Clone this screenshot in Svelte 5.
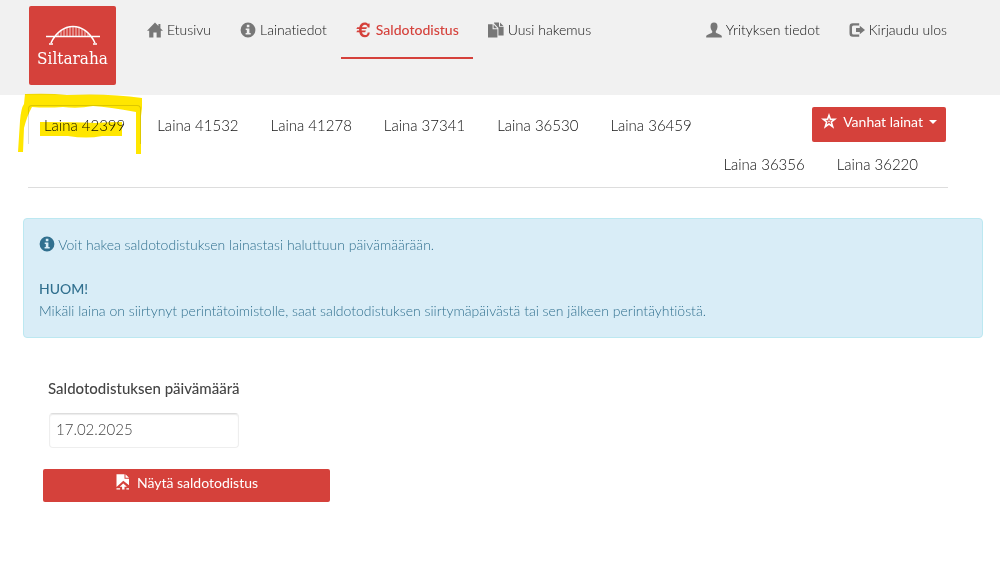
<script>
  let activeNav = $state('saldo');
  let activeLoan = $state('42399');
  let date = $state('17.02.2025');

  const mainNav = [
    { id: 'etusivu', icon: 'home', label: 'Etusivu' },
    { id: 'lainat', icon: 'info', label: 'Lainatiedot' },
    { id: 'saldo', icon: 'euro', label: 'Saldotodistus' },
    { id: 'hakemus', icon: 'copy', label: 'Uusi hakemus' }
  ];

  const userNav = [
    { id: 'yritys', icon: 'user', label: 'Yrityksen tiedot' },
    { id: 'ulos', icon: 'logout', label: 'Kirjaudu ulos' }
  ];

  const loans = ['42399', '41532', '41278', '37341', '36530', '36459'];
  const moreLoans = ['36356', '36220'];
</script>

{#snippet icon(name)}
  <svg class="icon" viewBox="0 0 16 16" aria-hidden="true">
    {#if name === 'home'}
      <path d="M8 0.4 0 8.8H2.2V15.4H6.4V10.4H9.6V15.4H13.8V8.8H16L13.4 6.2V2H11.4V4Z" />
    {:else if name === 'info'}
      <path fill-rule="evenodd" d="M8 0.6a7.4 7.4 0 1 0 0 14.8A7.4 7.4 0 0 0 8 0.6ZM6.8 2.8h2.6v2.4H6.8ZM5.7 6.4h3.7v4.6h1.3v1.6H5.6V11h1.2V8H5.7Z" />
    {:else if name === 'euro'}
      <path d="M13.6 1.6v3.8h-1.9C11.4 3.6 10.5 2.7 9 2.7 7.5 2.7 6.4 3.6 6 5.3h5L10.3 7H5.7v1.6h4.2l-.7 1.7H6c.5 1.8 1.5 2.7 3 2.7 1.6 0 2.5-1 2.7-2.6h2.1c-.3 3-2.1 4.9-4.9 4.9-3 0-5-1.8-5.6-5H.4l.8-1.7h1.9V7H.4l.8-1.7h2.1C3.9 2.3 6 .6 8.7.6c1.4 0 2.5.4 3.2 1.2Z" />
    {:else if name === 'copy'}
      <path d="M0 2.2H4.6V7.2H9.4V15.6H0ZM5.6 2.4 9.2 6.2H5.6ZM6 .6h5v4.2h4.6V13.4h-5.2V6L6.2 1.4ZM12 .6 15.4 3.9H12Z" />
    {:else if name === 'user'}
      <path d="M8 .5C10.4.5 11.5 2.1 11.5 4.4c0 1.8-.7 3.6-1.7 4.7v1.3c.3 1 5.5 1.8 6 3.7v1.3H.2v-1.3c.5-1.9 5.7-2.7 6-3.7V9.1C5.2 8 4.5 6.2 4.5 4.4 4.5 2.1 5.6.5 8 .5Z" />
    {:else if name === 'logout'}
      <path d="M10.2 1.2v2.2H4.5Q3 3.4 3 4.9v6.2q0 1.5 1.5 1.5h5.7v2.2H3.8Q.5 14.8.5 11.5v-7Q.5 1.2 3.8 1.2ZM10.8 3.7 16 8l-5.2 4.3V9.9H7V6.1h3.8Z" />
    {:else if name === 'star'}
      <path fill-rule="evenodd" d="m8 0 2 5.6h6l-4.8 3.7 1.9 6.4L8 12l-5.1 3.7 1.9-6.4L0 5.6h6ZM8 4.6 7.1 7.2H4.6l2 1.6-.8 2.6L8 9.9l2.2 1.5-.8-2.6 2-1.6H8.9Z" />
      <circle cx="8" cy="8.4" r="0.8" />
    {:else if name === 'file'}
      <path d="M1.5.2h8v4.6H14v6.4L8.3 6.8 1.5 13ZM10.5.2 14 3.8h-3.5ZM8.3 9.6l3.6 3.2H9.5v2.8H7.1v-2.8H4.7ZM1.5 14.2h3.6v1.4H1.5ZM11.4 14.2H14v1.4h-2.6Z" />
    {/if}
  </svg>
{/snippet}

{#snippet navItem(item)}
  <li>
    <a
      href="#{item.id}"
      class="nav-link"
      class:active={activeNav === item.id}
      onclick={() => (activeNav = item.id)}
    >
      {@render icon(item.icon)}
      <span>{item.label}</span>
    </a>
  </li>
{/snippet}

{#snippet tab(loan)}
  <li class="tab">
    <a
      href="#laina-{loan}"
      class="tab-link"
      class:active={activeLoan === loan}
      onclick={() => (activeLoan = loan)}
    >
      Laina {loan}
    </a>
    {#if loan === '42399'}
      <svg class="marker" viewBox="0 0 130 66" aria-hidden="true">
        <path d="M7 0Q32 -1 49 1 90 -1 124 4V14L123 22V60H118V18Q91 13 75 12 60 15 45 13 28 14 14 13 9 22 6 34L5 58H0L2 27Q3 14 6 10Z" />
        <path d="M22 28Q55 28 77 29 92 28 104 28V42H84Q69 45 50 42 30 42 22 42Z" />
      </svg>
    {/if}
  </li>
{/snippet}

<header class="header">
  <a href="#etusivu" class="logo">
    <svg viewBox="0 0 54 20" aria-hidden="true">
      <path d="M0 11.5H54M5 18C15-4 39-4 49 18" />
      <path class="thin" d="M12 11V8M15 11V6M18 11V4M21 11V3M24 11V2M27 11V2M30 11V2M33 11V3M36 11V4M39 11V6M42 11V8" />
      <path d="M3 19H7M47 19H51" />
    </svg>
    <span>Siltaraha</span>
  </a>
  <ul class="nav">
    {#each mainNav as item}
      {@render navItem(item)}
    {/each}
  </ul>
  <ul class="nav user-nav">
    {#each userNav as item}
      {@render navItem(item)}
    {/each}
  </ul>
</header>

<main>
  <nav class="loans">
    <div class="loans-row">
      <ul class="tabs">
        {#each loans as loan}
          {@render tab(loan)}
        {/each}
      </ul>
      <button type="button" class="btn">
        {@render icon('star')}
        <span>Vanhat lainat</span>
        <i class="caret"></i>
      </button>
    </div>
    <ul class="tabs tabs-more">
      {#each moreLoans as loan}
        {@render tab(loan)}
      {/each}
    </ul>
  </nav>

  <section class="alert">
    <p class="lead">{@render icon('info')} Voit hakea saldotodistuksen lainastasi haluttuun päivämäärään.</p>
    <p><strong>HUOM!</strong></p>
    <p>Mikäli laina on siirtynyt perintätoimistolle, saat saldotodistuksen siirtymäpäivästä tai sen jälkeen perintäyhtiöstä.</p>
  </section>

  <form class="form" onsubmit={(e) => e.preventDefault()}>
    <label for="date">Saldotodistuksen päivämäärä</label>
    <input id="date" type="text" bind:value={date} />
    <button type="submit" class="btn submit">
      {@render icon('file')}
      <span>Näytä saldotodistus</span>
    </button>
  </form>
</main>

<style>
  :global(body) {
    background: #fff;
    color: #333;
    font: 300 14px/22px Lato, 'Open Sans', sans-serif;
    font-variant-ligatures: none;
  }

  ul {
    display: flex;
    margin: 0;
    padding: 0;
    list-style: none;
  }

  p {
    margin: 0;
  }

  a {
    color: #111;
    text-decoration: none;
  }

  .icon {
    width: 16px;
    height: 16px;
    flex: none;
    fill: currentColor;
  }

  .header {
    display: flex;
    align-items: flex-start;
    height: 95px;
    padding: 0 39px 0 29px;
    background: #f1f1f1;
    box-sizing: border-box;
  }

  .logo {
    display: flex;
    flex-direction: column;
    align-items: center;
    width: 87px;
    height: 79px;
    margin: 6px 16px 0 0;
    padding-top: 19px;
    box-sizing: border-box;
    border-radius: 2px;
    background: #d5413b;
    color: #fff;
    font: 17px/26px 'DejaVu Serif Condensed', 'DejaVu Serif', serif;
  }

  .logo svg {
    width: 54px;
    height: 20px;
    fill: none;
    stroke: #fff;
    stroke-width: 1.6;
  }

  .logo .thin {
    stroke-width: 1;
    opacity: 0.7;
  }

  .nav-link {
    display: flex;
    align-items: center;
    gap: 4px;
    height: 59px;
    padding: 3px 14px 0 15px;
    box-sizing: border-box;
    border-bottom: 2px solid transparent;
  }

  .nav-link .icon {
    color: #777;
  }

  .nav-link.active,
  .nav-link.active .icon {
    color: #d5413b;
  }

  .nav-link.active {
    border-color: #d5413b;
    font-weight: 500;
  }

  .user-nav {
    margin-left: auto;
  }

  .loans {
    margin: 0 52px 0 28px;
    padding: 10px 0 4px;
    border-bottom: 1px solid #ddd;
  }

  .loans-row {
    display: flex;
    align-items: flex-start;
    justify-content: space-between;
  }

  .tabs {
    font-size: 15px;
  }

  .tabs-more {
    justify-content: flex-end;
    padding-right: 14px;
  }

  .tab {
    position: relative;
  }

  .tab-link {
    display: block;
    padding: 8px 15px;
    border: 1px solid transparent;
    border-bottom: 0;
    border-radius: 4px 4px 0 0;
  }

  .tab-link.active {
    border-color: #ddd;
  }

  .marker {
    position: absolute;
    top: -11px;
    left: -10px;
    width: 130px;
    height: 66px;
    overflow: visible;
    fill: #ffe600;
    mix-blend-mode: multiply;
    pointer-events: none;
  }

  .btn {
    display: flex;
    align-items: center;
    justify-content: center;
    gap: 6px;
    height: 35px;
    padding: 0 9px 5px;
    border: 0;
    border-radius: 2px;
    background: #d5413b;
    color: #fff;
    font: inherit;
    font-weight: 400;
    cursor: pointer;
  }

  .btn .icon {
    margin-bottom: 3px;
  }

  .loans .btn {
    margin: 2px 2px 0 0;
  }

  .caret {
    border: 4px solid transparent;
    border-top-color: #fff;
    border-bottom: 0;
  }

  .alert {
    margin: 30px 17px 0 23px;
    padding: 15px;
    border: 1px solid #bce8f1;
    border-radius: 4px;
    background: #d9edf7;
    color: #31708f;
  }

  .alert .lead {
    margin-bottom: 22px;
  }

  .alert .icon {
    vertical-align: -2px;
  }

  strong {
    font-weight: 500;
  }

  .form {
    display: flex;
    flex-direction: column;
    width: 287px;
    margin: 39px 0 0 43px;
  }

  label {
    padding-left: 5px;
    color: #444;
    font-size: 15px;
    font-weight: 500;
  }

  input {
    width: 190px;
    height: 35px;
    margin: 14px 0 21px 6px;
    padding: 0 6px 4px;
    box-sizing: border-box;
    border: 1px solid #eee;
    border-top-color: #ddd;
    border-radius: 4px;
    box-shadow: inset 0 1px 1px rgba(0, 0, 0, 0.08);
    color: #444;
    font: inherit;
    font-size: 15px;
  }

  .submit {
    height: 33px;
  }
</style>
